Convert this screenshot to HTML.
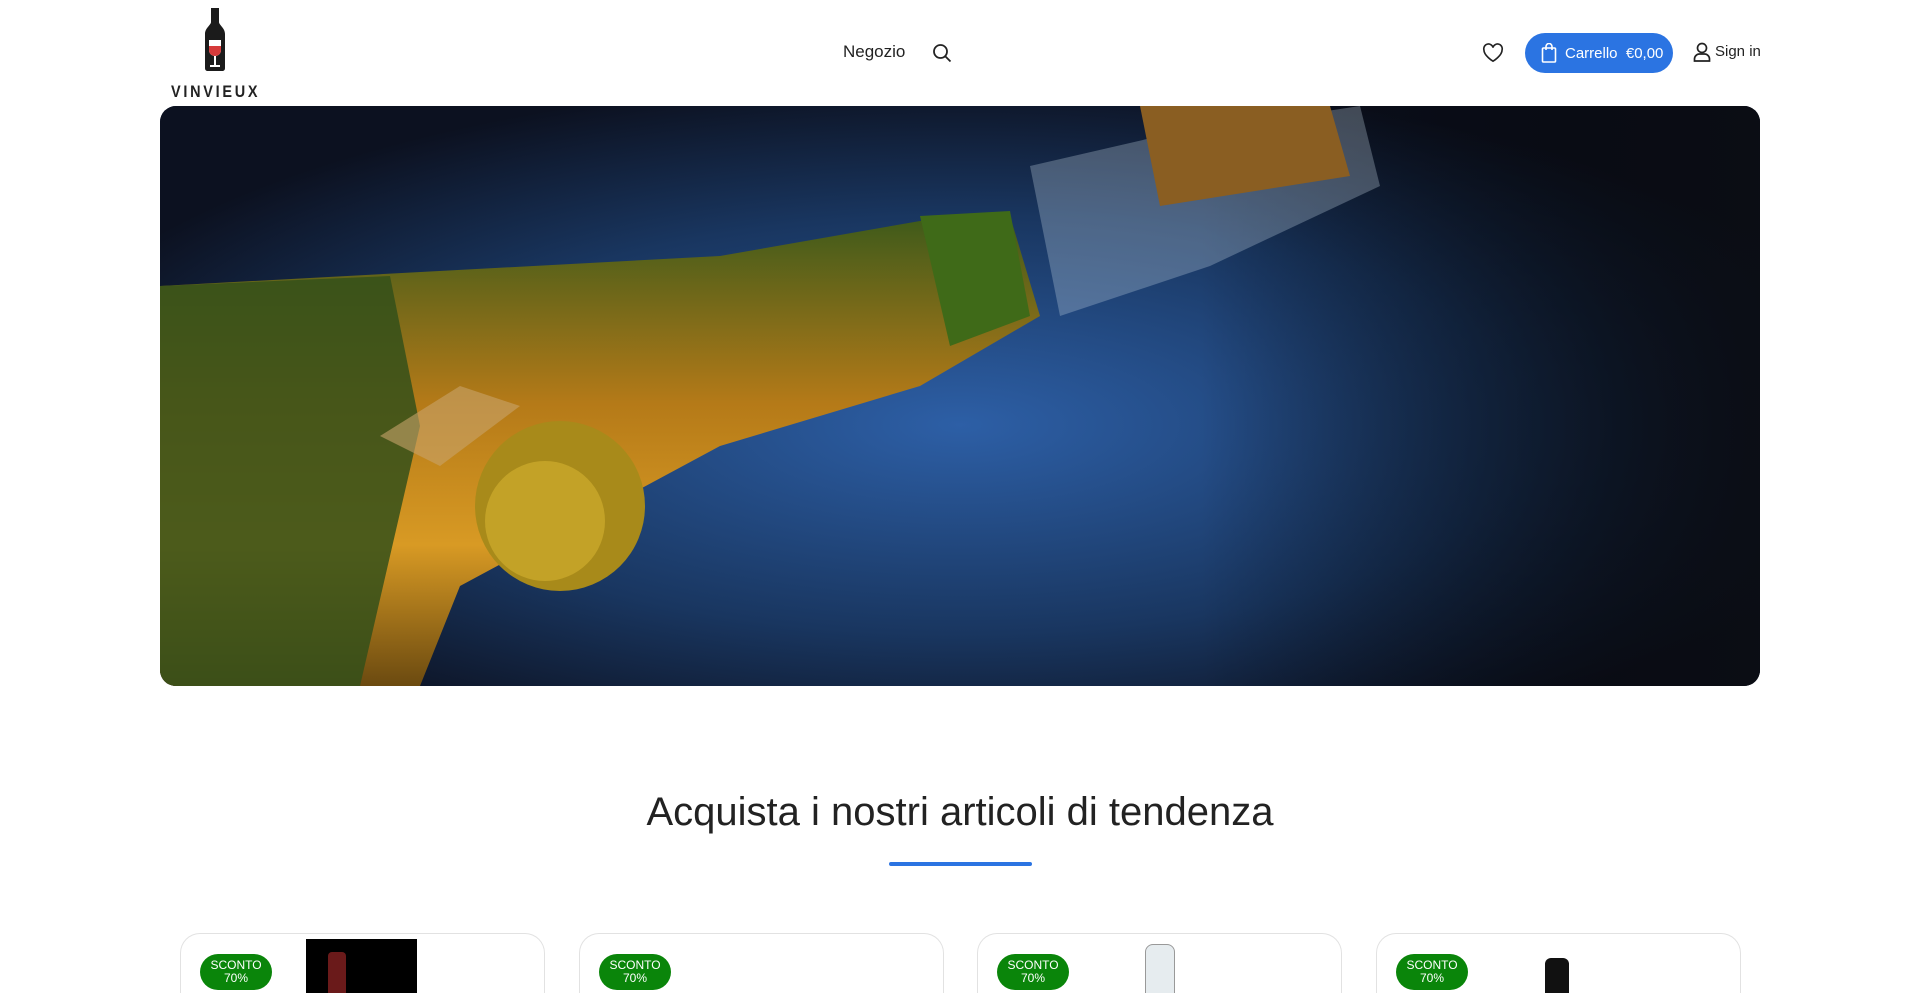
<!DOCTYPE html>
<html><head><meta charset="utf-8">
<style>
*{margin:0;padding:0;box-sizing:border-box}
html,body{width:1920px;height:993px;overflow:hidden}
body{background:#fff;font-family:"Liberation Sans",sans-serif;position:relative;color:#222}
.abs{position:absolute}
.nav{font-size:17px;color:#222}
.cart{left:1525px;top:33px;width:148px;height:40px;border-radius:20px;background:#2b74e2;color:#fff;font-size:15px;display:flex;align-items:center;padding-left:16px;gap:8px}
.hero{left:160px;top:106px;width:1600px;height:580px;border-radius:16px;overflow:hidden;background:#0d1a30}
h1{position:absolute;left:0;width:1920px;top:790px;text-align:center;font-size:40px;font-weight:500;color:#222}
.line{left:889px;top:862px;width:143px;height:4px;background:#2b74e2;border-radius:2px}
.card{top:933px;width:365px;height:60px;border:1px solid #e2e2e2;border-bottom:none;border-radius:20px 20px 0 0}
.badge{top:954px;width:72px;height:36px;border-radius:18px;background:#0a850a;color:#fff;font-size:12px;line-height:13px;text-align:center;padding-top:5px}
</style></head><body>
<svg class="abs" style="left:195px;top:6px" width="40" height="66" viewBox="0 0 40 66">
<path d="M16 2h8v14c0 3 6 6 6 12v34c0 2-1 3-3 3H13c-2 0-3-1-3-3V28c0-6 6-9 6-12z" fill="#1b1b1b"/>
<path d="M14 34h12v10c0 4-3 6-6 6s-6-2-6-6z" fill="#fff"/>
<path d="M14 40h12v4c0 4-3 6-6 6s-6-2-6-6z" fill="#d63a3a"/>
<rect x="19" y="50" width="2" height="10" fill="#fff"/><rect x="15" y="59" width="10" height="2" fill="#fff"/>
</svg>
<div class="abs" style="left:171px;top:82px;font-size:17px;font-weight:bold;letter-spacing:3.2px;color:#222;transform:scaleX(0.85);transform-origin:left">VINVIEUX</div>
<div class="abs nav" style="left:843px;top:42px">Negozio</div>
<svg class="abs" style="left:932px;top:43px" width="20" height="20" viewBox="0 0 20 20" fill="none" stroke="#222" stroke-width="1.8"><circle cx="8.5" cy="8.5" r="6.5"/><path d="M13.5 13.5l5 5"/></svg>
<svg class="abs" style="left:1482px;top:43px" width="22" height="20" viewBox="0 0 24 22" fill="none" stroke="#222" stroke-width="1.8"><path d="M12 20S2 14 2 7.5A5 5 0 0 1 12 5a5 5 0 0 1 10 2.5C22 14 12 20 12 20z"/></svg>
<div class="abs cart"><svg width="16" height="20" viewBox="0 0 16 20" fill="none" stroke="#fff" stroke-width="1.6"><rect x="1.5" y="5" width="13" height="14" rx="1"/><path d="M5 7V3.5a3 3 0 0 1 6 0V7"/></svg><span>Carrello&nbsp; €0,00</span></div>
<svg class="abs" style="left:1693px;top:42px" width="18" height="20" viewBox="0 0 18 20" fill="none" stroke="#222" stroke-width="1.7"><circle cx="9" cy="6" r="4.5"/><path d="M1.5 19v-2a5 5 0 0 1 5-5h5a5 5 0 0 1 5 5v2z"/></svg>
<div class="abs" style="left:1715px;top:43px;font-size:15px;font-weight:500">Sign in</div>
<div class="abs hero">
<svg width="1600" height="580" viewBox="0 0 1600 580">
<defs>
<radialGradient id="bg" cx="0.5" cy="0.55" r="0.6"><stop offset="0" stop-color="#2d5fa6"/><stop offset="0.6" stop-color="#193660"/><stop offset="1" stop-color="#0c1120"/></radialGradient>
<linearGradient id="bt" x1="0" y1="0" x2="0" y2="1"><stop offset="0" stop-color="#3d5a1a"/><stop offset="0.4" stop-color="#b57a18"/><stop offset="0.7" stop-color="#d89a24"/><stop offset="1" stop-color="#6b4a10"/></linearGradient>
<linearGradient id="rt" x1="0" y1="0" x2="1" y2="0"><stop offset="0.65" stop-color="#000" stop-opacity="0"/><stop offset="1" stop-color="#0b0d14" stop-opacity="0.95"/></linearGradient>
</defs>
<rect width="1600" height="580" fill="url(#bg)"/>
<rect width="1600" height="580" fill="url(#rt)"/>
<path d="M0 180 L560 150 L760 115 L850 110 L880 210 L760 280 L560 340 L300 480 L260 580 L0 580z" fill="url(#bt)"/>
<path d="M0 180 L230 170 L260 320 L200 580 L0 580z" fill="#34501a" opacity="0.85"/>
<path d="M760 110 L850 105 L870 210 L790 240z" fill="#3f6a18"/>
<path d="M870 60 L1000 30 L1200 0 L1220 80 L1050 160 L900 210z" fill="#c8d6e6" opacity="0.3"/>
<path d="M980 0 L1170 0 L1190 70 L1000 100z" fill="#8a5e22"/>
<circle cx="400" cy="400" r="85" fill="#a88a1a"/>
<circle cx="385" cy="415" r="60" fill="#c9a82a" opacity="0.8"/>
<path d="M220 330 L300 280 L360 300 L280 360z" fill="#c8a46a" opacity="0.6"/>
</svg></div>
<h1>Acquista i nostri articoli di tendenza</h1>
<div class="abs line"></div>
<div class="abs card" style="left:180px"></div>
<div class="abs card" style="left:579px"></div>
<div class="abs card" style="left:977px"></div>
<div class="abs card" style="left:1376px"></div>
<div class="abs" style="left:306px;top:939px;width:111px;height:60px;background:#000"></div>
<div class="abs" style="left:328px;top:952px;width:18px;height:50px;background:#6a1a1a;border-radius:4px 4px 0 0"></div>
<div class="abs" style="left:1145px;top:944px;width:30px;height:55px;background:#e6ecef;border-radius:8px 8px 0 0;border:1px solid #999"></div>
<div class="abs" style="left:1545px;top:958px;width:24px;height:40px;background:#111;border-radius:6px 6px 0 0"></div>
<div class="abs badge" style="left:200px">SCONTO<br>70%</div>
<div class="abs badge" style="left:599px">SCONTO<br>70%</div>
<div class="abs badge" style="left:997px">SCONTO<br>70%</div>
<div class="abs badge" style="left:1396px">SCONTO<br>70%</div>
</body></html>
